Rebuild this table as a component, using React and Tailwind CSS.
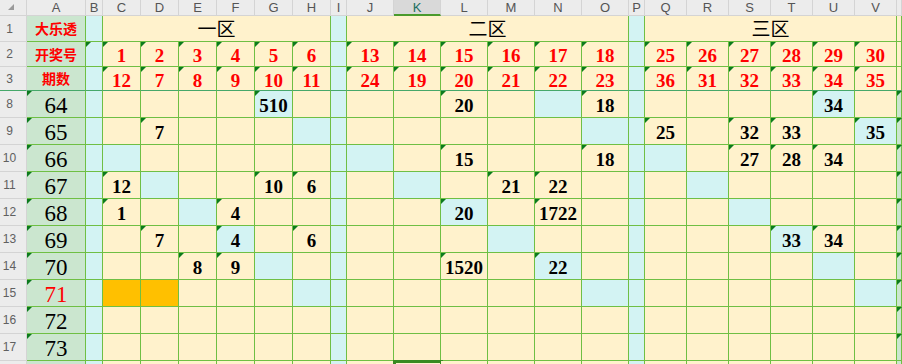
import React from "react";

const SERIF = "font-['Liberation_Serif',serif]";
const CJK = "font-['Noto_Sans_CJK_SC','Noto_Sans',sans-serif]";

const letters = ["A","B","C","D","E","F","G","H","I","J","K","L","M","N","O","P","Q","R","S","T","U","V",""];
const dataCols = ["C","D","E","F","G","H","I","J","K","L","M","N","O","P","Q","R","S","T","U","V"];
const sepCols = ["I","P"];

const row2 = { C:"1",D:"2",E:"3",F:"4",G:"5",H:"6",J:"13",K:"14",L:"15",M:"16",N:"17",O:"18",Q:"25",R:"26",S:"27",T:"28",U:"29",V:"30" };
const row3 = { C:"12",D:"7",E:"8",F:"9",G:"10",H:"11",J:"24",K:"19",L:"20",M:"21",N:"22",O:"23",Q:"36",R:"31",S:"32",T:"33",U:"34",V:"35" };

const rows = [
  { n: 8, label: "64", cells: { G:{v:"510",c:1,t:1}, L:{v:"20",t:1}, N:{c:1}, O:{v:"18",t:1}, U:{v:"34",c:1,t:1} } },
  { n: 9, label: "65", cells: { D:{v:"7",t:1}, H:{c:1}, O:{c:1}, Q:{v:"25",t:1}, S:{v:"32",t:1}, T:{v:"33",t:1}, V:{v:"35",c:1,t:1} } },
  { n: 10, label: "66", cells: { C:{c:1}, J:{c:1}, L:{v:"15",t:1}, O:{v:"18",t:1}, Q:{c:1}, S:{v:"27",t:1}, T:{v:"28",t:1}, U:{v:"34",t:1} } },
  { n: 11, label: "67", cells: { C:{v:"12",t:1}, D:{c:1}, G:{v:"10",t:1}, H:{v:"6",t:1}, K:{c:1}, M:{v:"21",t:1}, N:{v:"22",t:1}, R:{c:1} } },
  { n: 12, label: "68", cells: { C:{v:"1",t:1}, E:{c:1}, F:{v:"4",t:1}, L:{v:"20",c:1,t:1}, N:{v:"1722",t:1}, S:{c:1} } },
  { n: 13, label: "69", cells: { D:{v:"7",t:1}, F:{v:"4",c:1,t:1}, H:{v:"6",t:1}, M:{c:1}, T:{v:"33",c:1,t:1}, U:{v:"34",t:1} } },
  { n: 14, label: "70", cells: { E:{v:"8",t:1}, F:{v:"9",t:1}, G:{c:1}, L:{v:"1520",t:1}, N:{v:"22",c:1,t:1}, U:{c:1} } },
  { n: 15, label: "71", red: true, cells: { C:{o:1}, D:{o:1}, H:{c:1}, O:{c:1}, V:{c:1} } },
  { n: 16, label: "72", cells: {} },
  { n: 17, label: "73", cells: {} },
];

function Tri() {
  return <span className="absolute left-0 top-0 h-0 w-0 border-t-[5px] border-r-[5px] border-t-[#0c7a1e] border-r-transparent" />;
}

function Cell({ bg = "bg-[#fff2cc]", tri, bottom = "border-b-[#6fbf44]", extra = "", children }) {
  return (
    <div className={`relative box-border flex items-center justify-center overflow-visible whitespace-nowrap border-r border-b border-r-[#6fbf44] ${bottom} ${bg} ${extra}`}>
      {tri ? <Tri /> : null}
      {children}
    </div>
  );
}

function RowHead({ n, bottom = "border-b-[#d4d4d4]" }) {
  return (
    <div className={`box-border flex items-center border-r border-b border-r-[#d4d4d4] ${bottom} bg-[#ececec] text-[12px] text-[#606060] font-['Liberation_Sans',sans-serif]`}>
      <span className="w-[19px] text-center">{n}</span>
    </div>
  );
}

export default function App() {
  const numCls = `${SERIF} text-[19px] font-bold leading-none pt-[3px]`;
  return (
    <div className="h-[364px] w-[902px] overflow-hidden bg-white">
      <div className="grid grid-cols-[27px_59px_17px_38px_38px_38px_38px_38px_38px_16px_47px_47px_47px_47px_47px_47px_16px_42px_42px_42px_42px_42px_42px_5px] grid-rows-[16px_26px_25px_24px_27px_27px_27px_27px_27px_27px_27px_27px_27px_27px_27px]">
        {/* header row */}
        <div className="relative box-border border-r border-b border-[#d4d4d4] bg-[#ececec]">
          <span className="absolute left-[8px] top-[4px] h-0 w-0 border-b-[6px] border-l-[6px] border-b-[#9a9a9a] border-l-transparent" />
        </div>
        {letters.map((l, i) =>
          l === "K" ? (
            <div key={i} className="box-border flex items-center justify-center border-r border-r-[#d4d4d4] border-b-2 border-b-[#4a9a2c] bg-[#d9d9d9] pt-[1px] text-[13px] text-[#1d6f62] font-['Liberation_Sans',sans-serif]">
              {l}
            </div>
          ) : (
            <div key={i} className="box-border flex items-center justify-center border-r border-b border-[#d4d4d4] bg-[#ececec] text-[13px] text-[#555] font-['Liberation_Sans',sans-serif]">
              {l}
            </div>
          )
        )}

        {/* row 1 */}
        <RowHead n={1} />
        <Cell bg="bg-[#cbe6cf]"><span className={`${CJK} text-[14px] font-bold text-[#ff0000]`}>大乐透</span></Cell>
        <Cell bg="bg-[#d3f3f3]" />
        <Cell extra="col-span-6"><span className={`${CJK} text-[19px] text-black`}>一区</span></Cell>
        <Cell bg="bg-[#d3f3f3]" />
        <Cell extra="col-span-6"><span className={`${CJK} text-[19px] text-black`}>二区</span></Cell>
        <Cell bg="bg-[#d3f3f3]" />
        <Cell extra="col-span-6"><span className={`${CJK} text-[19px] text-black`}>三区</span></Cell>
        <Cell />

        {/* row 2 */}
        <RowHead n={2} />
        <Cell bg="bg-[#cbe6cf]"><span className={`${CJK} text-[14px] font-bold text-[#ff0000]`}>开奖号</span></Cell>
        <Cell bg="bg-[#d3f3f3]" tri />
        {dataCols.map((c) =>
          sepCols.includes(c) ? (
            <Cell key={c} bg="bg-[#d3f3f3]" />
          ) : (
            <Cell key={c} tri><span className={`${numCls} text-[#ff0000]`}>{row2[c]}</span></Cell>
          )
        )}
        <Cell />

        {/* row 3 */}
        <RowHead n={3} bottom="border-b-[#46a86a]" />
        <Cell bg="bg-[#cbe6cf]" bottom="border-b-[#46a86a]"><span className={`${CJK} text-[14px] font-bold text-[#ff0000]`}>期数</span></Cell>
        <Cell bg="bg-[#d3f3f3]" bottom="border-b-[#46a86a]" />
        {dataCols.map((c) =>
          sepCols.includes(c) ? (
            <Cell key={c} bg="bg-[#d3f3f3]" bottom="border-b-[#46a86a]" />
          ) : (
            <Cell key={c} tri bottom="border-b-[#46a86a]"><span className={`${numCls} text-[#ff0000]`}>{row3[c]}</span></Cell>
          )
        )}
        <Cell bottom="border-b-[#46a86a]" />

        {/* data rows */}
        {rows.map((r) => (
          <React.Fragment key={r.n}>
            <RowHead n={r.n} />
            <Cell bg="bg-[#cbe6cf]" tri>
              <span className={`${SERIF} text-[23px] leading-none pt-[2px] ${r.red ? "text-[#ff0000]" : "text-black"}`}>{r.label}</span>
            </Cell>
            <Cell bg="bg-[#d3f3f3]" />
            {dataCols.map((c) => {
              if (sepCols.includes(c)) return <Cell key={c} bg="bg-[#d3f3f3]" />;
              const d = r.cells[c] || {};
              const bg = d.o ? "bg-[#ffc000]" : d.c ? "bg-[#d3f3f3]" : "bg-[#fff2cc]";
              return (
                <Cell key={c} bg={bg} tri={d.t}>
                  {d.v ? <span className={`${numCls} text-black`}>{d.v}</span> : null}
                </Cell>
              );
            })}
            <Cell bg="bg-[#cbe6cf]" tri />
          </React.Fragment>
        ))}

        {/* row 18 partial */}
        <div className="box-border border-r border-[#d4d4d4] bg-[#ececec]" />
        <Cell bg="bg-[#cbe6cf]" />
        <Cell bg="bg-[#d3f3f3]" />
        {dataCols.map((c) =>
          sepCols.includes(c) ? (
            <Cell key={c} bg="bg-[#d3f3f3]" />
          ) : c === "K" ? (
            <Cell key={c}>
              <span className="absolute -left-[1px] -top-[1px] h-[30px] w-[50px] border-[3px] border-[#3a8a22]" />
            </Cell>
          ) : (
            <Cell key={c} />
          )
        )}
        <Cell bg="bg-[#cbe6cf]" />
      </div>
    </div>
  );
}
